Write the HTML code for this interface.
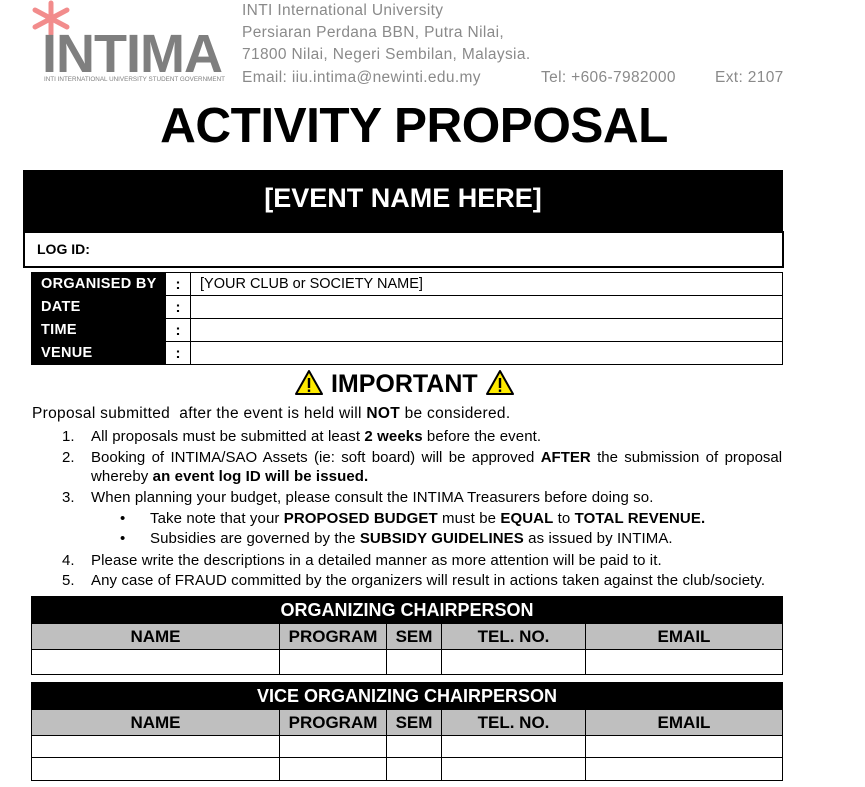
<!DOCTYPE html><html><head><meta charset="utf-8"><style>
body{margin:0;width:865px;height:787px;background:#fff;font-family:"Liberation Sans",sans-serif;position:relative;overflow:hidden;color:#000}
.a{position:absolute;white-space:nowrap}
.hd{color:#8a8a8a;font-size:15.5px;letter-spacing:.35px}
table{position:absolute;border-collapse:collapse;table-layout:fixed}
td{border:1px solid #000;padding:0;font-size:15px;font-weight:bold;text-align:center;overflow:hidden;white-space:nowrap}
.bk{background:#000;color:#fff;font-size:18px;font-weight:bold}
.gr{background:#bfbfbf;font-size:17px}
.it{position:absolute;font-size:15px;white-space:nowrap;letter-spacing:.1px}
.n{position:absolute;left:62px;font-size:15px}
</style></head><body>
<svg class="a" style="left:30px;top:0" width="42" height="38" viewBox="0 0 42 38"><g stroke="#f28c8c" stroke-width="5" stroke-linecap="round"><line x1="21" y1="3" x2="21" y2="34"/><line x1="5" y1="10" x2="37" y2="27"/><line x1="5" y1="27" x2="37" y2="10"/></g></svg>
<div class="a" style="left:42px;top:27px;color:#7f7f7f;font-size:54px;font-weight:bold;letter-spacing:-1px;line-height:54px">INTIMA</div>
<div class="a" style="left:44px;top:76px;color:#808080;font-size:6.3px">INTI INTERNATIONAL UNIVERSITY STUDENT GOVERNMENT</div>
<div class="a hd" style="left:242px;top:2px">INTI International University</div>
<div class="a hd" style="left:242px;top:24px">Persiaran Perdana BBN, Putra Nilai,</div>
<div class="a hd" style="left:242px;top:46px">71800 Nilai, Negeri Sembilan, Malaysia.</div>
<div class="a hd" style="left:242px;top:69px">Email: iiu.intima@newinti.edu.my</div>
<div class="a hd" style="left:541px;top:69px">Tel: +606-7982000</div>
<div class="a hd" style="left:715px;top:69px">Ext: 2107</div>
<div class="a" style="left:0;width:828px;text-align:center;top:97px;font-size:49.5px;font-weight:bold;letter-spacing:-.5px">ACTIVITY PROPOSAL</div>
<div class="a" style="left:23px;top:170px;width:760px;height:62px;background:#000;color:#fff;font-size:27px;font-weight:bold;text-align:center;line-height:56px">[EVENT NAME HERE]</div>
<div class="a" style="left:23px;top:231px;width:757px;height:33px;border:2px solid #000;font-size:14px;font-weight:bold;line-height:33px"><span style="margin-left:12px">LOG ID:</span></div>
<table style="left:31px;top:272px;width:752px">
<col style="width:134px"><col style="width:25px"><col>
<tr style="height:23px"><td class="bk" style="font-size:14.5px;text-align:left;padding-left:9px;letter-spacing:.3px">ORGANISED BY</td><td>:</td><td style="text-align:left;font-weight:normal;padding-left:9px;font-size:14.5px">[YOUR CLUB or SOCIETY NAME]</td></tr>
<tr style="height:23px"><td class="bk" style="font-size:14.5px;text-align:left;padding-left:9px;letter-spacing:.3px">DATE</td><td>:</td><td></td></tr>
<tr style="height:23px"><td class="bk" style="font-size:14.5px;text-align:left;padding-left:9px;letter-spacing:.3px">TIME</td><td>:</td><td></td></tr>
<tr style="height:23px"><td class="bk" style="font-size:14.5px;text-align:left;padding-left:9px;letter-spacing:.3px">VENUE</td><td>:</td><td></td></tr>
</table>
<div class="a" style="left:294px;top:369px;font-size:25px;font-weight:bold"><svg width="30" height="27" viewBox="0 0 30 27" style="vertical-align:-4px"><path d="M15 2 L28 25 L2 25 Z" fill="#ffeb00" stroke="#000" stroke-width="2" stroke-linejoin="round"/><rect x="13.8" y="9" width="2.4" height="10" fill="#000"/><rect x="13.8" y="20.5" width="2.4" height="2.4" fill="#000"/></svg> IMPORTANT <svg width="30" height="27" viewBox="0 0 30 27" style="vertical-align:-4px"><path d="M15 2 L28 25 L2 25 Z" fill="#ffeb00" stroke="#000" stroke-width="2" stroke-linejoin="round"/><rect x="13.8" y="9" width="2.4" height="10" fill="#000"/><rect x="13.8" y="20.5" width="2.4" height="2.4" fill="#000"/></svg></div>
<div class="it" style="left:32px;top:405px;font-size:15.5px;letter-spacing:.3px">Proposal submitted &nbsp;after the event is held will <b>NOT</b> be considered.</div>
<div class="n" style="top:428px">1.</div><div class="it" style="left:91px;top:428px">All proposals must be submitted at least <b>2 weeks</b> before the event.</div>
<div class="n" style="top:449px">2.</div><div class="it" style="left:91px;top:449px;letter-spacing:0;word-spacing:2.2px">Booking of INTIMA/SAO Assets (ie: soft board) will be approved <b>AFTER</b> the submission of proposal</div>
<div class="it" style="left:91px;top:468px">whereby <b>an event log ID will be issued.</b></div>
<div class="n" style="top:489px">3.</div><div class="it" style="left:91px;top:489px">When planning your budget, please consult the INTIMA Treasurers before doing so.</div>
<div class="it" style="left:120px;top:510px">•</div><div class="it" style="left:150px;top:510px">Take note that your <b>PROPOSED BUDGET</b> must be <b>EQUAL</b> to <b>TOTAL REVENUE.</b></div>
<div class="it" style="left:120px;top:530px">•</div><div class="it" style="left:150px;top:530px">Subsidies are governed by the <b>SUBSIDY GUIDELINES</b> as issued by INTIMA.</div>
<div class="n" style="top:552px">4.</div><div class="it" style="left:91px;top:552px">Please write the descriptions in a detailed manner as more attention will be paid to it.</div>
<div class="n" style="top:572px">5.</div><div class="it" style="left:91px;top:572px">Any case of FRAUD committed by the organizers will result in actions taken against the club/society.</div>
<table style="left:31px;top:596px;width:752px">
<col style="width:248px"><col style="width:107px"><col style="width:55px"><col style="width:144px"><col>
<tr style="height:27px"><td class="bk" colspan="5">ORGANIZING CHAIRPERSON</td></tr>
<tr style="height:26px"><td class="gr">NAME</td><td class="gr">PROGRAM</td><td class="gr">SEM</td><td class="gr">TEL. NO.</td><td class="gr">EMAIL</td></tr>
<tr style="height:25px"><td></td><td></td><td></td><td></td><td></td></tr>
</table>
<table style="left:31px;top:682px;width:752px">
<col style="width:248px"><col style="width:107px"><col style="width:55px"><col style="width:144px"><col>
<tr style="height:27px"><td class="bk" colspan="5">VICE ORGANIZING CHAIRPERSON</td></tr>
<tr style="height:26px"><td class="gr">NAME</td><td class="gr">PROGRAM</td><td class="gr">SEM</td><td class="gr">TEL. NO.</td><td class="gr">EMAIL</td></tr>
<tr style="height:22px"><td></td><td></td><td></td><td></td><td></td></tr>
<tr style="height:23px"><td></td><td></td><td></td><td></td><td></td></tr>
</table>
</body></html>
